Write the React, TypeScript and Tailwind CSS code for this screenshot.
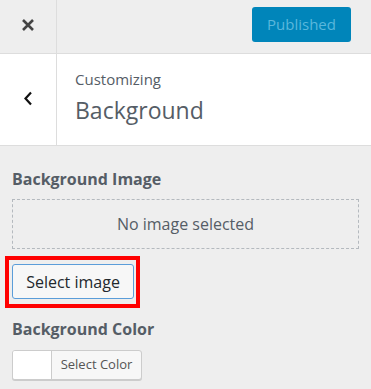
const XIcon = () => (
  <svg width="14" height="14" viewBox="0 0 14 14" fill="none">
    <path d="M2 2L12 12M12 2L2 12" stroke="#444" strokeWidth="2.6" />
  </svg>
);

const ChevronLeft = () => (
  <svg width="10" height="15" viewBox="0 0 10 15" fill="none">
    <path d="M8 1.5L2.5 7.5L8 13.5" stroke="#111" strokeWidth="2.2" />
  </svg>
);

export default function App() {
  return (
    <div className="w-[371px] h-[389px] overflow-hidden bg-[#eeeeee] font-['Open_Sans',sans-serif] text-[#555d66]">
      {/* Top bar */}
      <div className="flex h-[54px] border-b border-[#dddddd]">
        <div className="w-[57px] border-r border-[#dddddd] flex items-center justify-center pb-[3px]">
          <XIcon />
        </div>
        <div className="flex-1 flex justify-end items-start pt-[7px] pr-[20px]">
          <button className="w-[99px] h-[35px] rounded-[3px] bg-[#0085ba] text-[#5ab7dc] text-[15px]">
            Published
          </button>
        </div>
      </div>

      {/* Section header */}
      <div className="flex h-[92px] bg-white border-b border-[#dddddd]">
        <div className="w-[57px] border-r border-[#dddddd] flex items-center justify-center pb-[3px]">
          <ChevronLeft />
        </div>
        <div className="pl-[18px] pt-[15px]">
          <div className="text-[15px] leading-[20px]">Customizing</div>
          <div className="text-[23px] leading-[30px] mt-[6px]">Background</div>
        </div>
      </div>

      {/* Controls */}
      <div className="px-3 pt-[22px]">
        <div className="text-[16px] font-bold leading-[22px]">Background Image</div>
        <div className="mt-[9px] h-[50px] border border-dashed border-[#b4b9be] flex items-center justify-center text-[16px]">
          No image selected
        </div>
        <div className="mt-[7px] -ml-[7px] w-[135px] border-[4px] border-[#ff0000] pl-[3px] pr-[2px] pt-[4px] pb-[5px]">
          <button className="w-[122px] h-[35px] rounded-[3px] bg-[#f7f7f7] border border-[#5b9dd9] text-[16px] text-[#23282d]">
            Select image
          </button>
        </div>
        <div className="mt-[10px] text-[16px] font-bold leading-[22px]">Background Color</div>
        <div className="mt-[10px] flex w-[130px] h-[30px] rounded-[3px] border border-[#cccccc] bg-[#f7f7f7] overflow-hidden shadow-[0_1px_0_#ccc]">
          <div className="w-[39px] bg-white border-r border-[#cccccc]" />
          <div className="flex-1 flex items-center justify-center text-[13px] text-[#555]">Select Color</div>
        </div>
      </div>
    </div>
  );
}
